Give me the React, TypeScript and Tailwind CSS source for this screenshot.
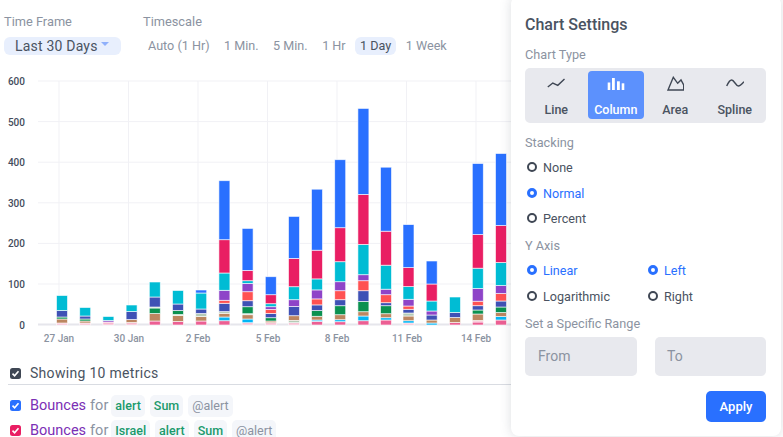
const colors: Record<string, string> = {
  q: '#f8bbd0',
  p: '#ec5f93',
  l: '#03b5f5',
  b: '#bc8660',
  s: '#b5cbb7',
  g: '#0b9150',
  i: '#3f51b5',
  r: '#ff5252',
  u: '#8e44c8',
  c: '#00bcd4',
  m: '#e91e63',
  B: '#2970ff',
};

// each bar: x center, then [colour, height] from the baseline up
const bars: [number, [string, number][]][] = [
  [62, [['q', 2], ['b', 4], ['g', 2], ['i', 6.5], ['c', 15]]],
  [85.2, [['q', 2], ['b', 2], ['g', 2], ['i', 3], ['c', 8.5]]],
  [108.4, [['q', 3], ['u', 1.5], ['c', 4]]],
  [131.6, [['q', 2.5], ['b', 3], ['i', 8], ['c', 6.5]]],
  [154.8, [['p', 4], ['b', 7.5], ['g', 5.5], ['s', 1], ['i', 10], ['c', 15]]],
  [178, [['p', 3.5], ['b', 6], ['s', 1], ['g', 4], ['i', 6.5], ['c', 13.5]]],
  [201.2, [['p', 4], ['b', 4.5], ['s', 3], ['i', 4.5], ['c', 16], ['B', 3]]],
  [224.4, [['p', 4.3], ['l', 3.7], ['b', 3.7], ['s', 1.7], ['i', 8.3], ['r', 3], ['u', 10], ['c', 17.3], ['m', 33.3], ['B', 59]]],
  [247.6, [['q', 2.3], ['l', 3.7], ['b', 4.3], ['s', 1], ['g', 7], ['i', 6], ['r', 9], ['u', 8.3], ['c', 2.7], ['m', 10.3], ['B', 42]]],
  [270.8, [['q', 2.3], ['b', 1.7], ['g', 3.3], ['i', 4.3], ['r', 4], ['u', 2.7], ['c', 3], ['m', 9], ['B', 18]]],
  [294, [['q', 2.3], ['s', 2.3], ['b', 4.7], ['i', 9.3], ['u', 6.7], ['c', 13], ['m', 28.3], ['B', 42]]],
  [317, [['p', 3.7], ['l', 1.3], ['b', 3.7], ['g', 5.7], ['i', 5.7], ['r', 6], ['u', 9], ['c', 11], ['m', 28.7], ['B', 61]]],
  [340.2, [['p', 3.3], ['l', 2], ['b', 5], ['g', 9], ['i', 6], ['r', 9], ['u', 9], ['c', 20], ['m', 34], ['B', 68]]],
  [363.4, [['p', 4.3], ['l', 4.7], ['b', 4.3], ['g', 10.3], ['i', 10.7], ['r', 10], ['u', 6], ['c', 30.3], ['m', 50], ['B', 86]]],
  [386, [['p', 5], ['l', 2.3], ['b', 4], ['g', 8], ['i', 3], ['r', 8], ['u', 5.5], ['c', 24], ['m', 34], ['B', 64]]],
  [408.5, [['q', 2], ['l', 2.3], ['b', 4.7], ['s', 3], ['i', 3.7], ['r', 3.3], ['u', 6.7], ['c', 12.7], ['m', 19], ['B', 43]]],
  [431.7, [['l', 2], ['b', 3], ['i', 5], ['u', 4], ['c', 10], ['m', 17], ['B', 23]]],
  [455, [['p', 2.5], ['b', 5], ['i', 5], ['c', 15.5]]],
  [477.8, [['p', 3], ['q', 1.5], ['b', 6.5], ['g', 4], ['i', 4.3], ['r', 4.5], ['u', 12.7], ['c', 20.3], ['m', 33.7], ['B', 71]]],
  [501, [['p', 5], ['l', 3.5], ['b', 4], ['g', 5.5], ['i', 6], ['r', 7.5], ['u', 8], ['c', 23], ['m', 37], ['B', 72]]],
];

const yTicks = [600, 500, 400, 300, 200, 100, 0];
const gridX = [59, 128.5, 198, 267.5, 337, 406.5, 476];
const xLabels = [
  [59, '27 Jan'],
  [129, '30 Jan'],
  [198, '2 Feb'],
  [268, '5 Feb'],
  [337, '8 Feb'],
  [407, '11 Feb'],
  [476, '14 Feb'],
] as const;

function Chart() {
  return (
    <svg width="512" height="270" viewBox="0 75 512 270" className="block">
      {yTicks.map((t, i) => (
        <g key={t}>
          <line x1="38" x2="512" y1={81 + i * 40.6} y2={81 + i * 40.6} stroke={t === 0 ? '#e6e6ec' : '#f1f1f5'} strokeWidth={t === 0 ? 2 : 1} />
          <text x="25" y={85 + i * 40.6} textAnchor="end" fontSize="10" fontWeight="500" fill="#444c5c" fontFamily="Roboto, sans-serif">{t}</text>
        </g>
      ))}
      {gridX.map((x) => (
        <line key={x} x1={x} x2={x} y1="81" y2="325" stroke="#f1f1f5" strokeWidth="1" />
      ))}
      {bars.map(([x, segs]) => {
        let y = 325;
        return (
          <g key={x}>
            {segs.map(([c, h], i) => {
              y -= h;
              return <rect key={i} x={x - 5.5} y={y} width="11" height={h} fill={colors[c]} stroke="#ffffff" strokeOpacity="0.75" strokeWidth="0.8" />;
            })}
          </g>
        );
      })}
      {xLabels.map(([x, label]) => (
        <text key={label} x={x} y="342" textAnchor="middle" fontSize="10" fontWeight="500" fill="#8b93a1" fontFamily="Roboto, sans-serif">{label}</text>
      ))}
    </svg>
  );
}

function Radio({ label, on }: { label: string; on?: boolean }) {
  return (
    <div className={`flex items-center gap-[6px] pl-[2px] text-[12.6px] leading-[16px] ${on ? 'text-[#2970ff]' : 'text-[#4a5361]'}`}>
      {on ? (
        <span className="h-[10px] w-[10px] -translate-y-[1px] rounded-full border-[3px] border-[#2970ff] bg-white" />
      ) : (
        <span className="h-[10px] w-[10px] -translate-y-[1px] rounded-full border-2 border-[#3f4754] bg-white" />
      )}
      {label}
    </div>
  );
}

function TypeIcon({ name }: { name: string }) {
  if (name === 'Column')
    return (
      <svg width="18" height="15" viewBox="0 0 18 15" fill="#ffffff">
        <rect x="0.7" y="6.5" width="2.6" height="7.5" />
        <rect x="5" y="2" width="2.8" height="12" />
        <rect x="10" y="5.3" width="2.8" height="8.7" />
        <rect x="14.7" y="7.3" width="2.6" height="6.7" />
      </svg>
    );
  const paths: Record<string, string> = {
    Line: 'M0.8 11 L5.8 7 L10.8 9.3 L17.5 3',
    Area: 'M2 14 L7.3 1.3 L11.7 7.3 L15 4 L17.7 9 V14 Z',
    Spline: 'M0.7 10 C2.5 6 4 4 5.7 4 C8 4 10 10 12.3 10 C14 10 16 8 18 5.7',
  };
  return (
    <svg width="18" height="15" viewBox="0 0 18 15" fill="none" stroke="#3f4754" strokeWidth="1.4">
      <path d={paths[name]} />
    </svg>
  );
}

function Tag({ children, gray }: { children: string; gray?: boolean }) {
  return (
    <span className={`rounded-[5px] bg-[#f4f6fa] px-1 py-[3px] text-[12.5px] leading-[16px] ${gray ? 'text-[#8b93a1]' : 'font-medium text-[#1a9a6c]'}`}>
      {children}
    </span>
  );
}

function Check({ color }: { color: string }) {
  return (
    <svg width="11" height="11" viewBox="0 0 11 11" className="ml-[2px] shrink-0">
      <rect width="11" height="11" rx="2.5" fill={color} />
      <path d="M2.5 5.6 L4.6 7.8 L8.5 3.3" fill="none" stroke="#ffffff" strokeWidth="1.6" />
    </svg>
  );
}

function MetricRow({ color, tags }: { color: string; tags: string[] }) {
  return (
    <div className="flex h-[25px] items-center text-[14.5px] leading-[16px]">
      <Check color={color} />
      <span className="ml-[9px] text-[#7b2fb5]">Bounces</span>
      <span className="ml-1 text-[#8b93a1]">for</span>
      <div className="ml-[3px] flex gap-[5px]">
        {tags.map((t, i) => (
          <Tag key={i} gray={t.startsWith('@')}>{t}</Tag>
        ))}
      </div>
    </div>
  );
}

export default function App() {
  const scales = ['Auto (1 Hr)', '1 Min.', '5 Min.', '1 Hr', '1 Day', '1 Week'];
  return (
    <div className="relative h-[437px] w-[783px] overflow-hidden bg-white font-['Roboto',sans-serif]">
      <div className="flex gap-[22px] pl-[4px] pt-[14px]">
        <div>
          <div className="text-[12.8px] leading-[16px] text-[#8b93a1]">Time Frame</div>
          <div className="mt-[7px] flex h-[18px] w-[117px] items-center gap-[3px] rounded-[6px] bg-[#e8effd] pl-[11px] text-[14px] tracking-[0.2px] text-[#4a5361]">
            Last 30 Days
            <span className="mb-[4px] h-0 w-0 border-x-[4px] border-t-[4px] border-x-transparent border-t-[#8fb0fb]" />
          </div>
        </div>
        <div>
          <div className="text-[12.8px] leading-[16px] text-[#8b93a1]">Timescale</div>
          <div className="mt-[7px] flex h-[18px] items-center gap-[4.5px] text-[12.6px] text-[#8b93a1]">
            {scales.map((s) => (
              <span key={s} className={`rounded-[6px] px-[5px] leading-[18px] ${s === '1 Day' ? 'bg-[#e8effd] text-[#4a5361]' : ''}`}>{s}</span>
            ))}
          </div>
        </div>
      </div>
      <div className="mt-[20px]">
        <Chart />
      </div>
      <div className="pl-[8px] pt-[17px]">
        <div className="flex h-[23px] w-[503px] items-center gap-[9px] border-b border-[#d9dce2] text-[14px] tracking-[0.3px] text-[#4a5361]">
          <Check color="#3f4754" />
          Showing 10 metrics
        </div>
        <div className="pt-[8px]">
          <MetricRow color="#2970ff" tags={['alert', 'Sum', '@alert']} />
          <MetricRow color="#e91e63" tags={['Israel', 'alert', 'Sum', '@alert']} />
        </div>
      </div>
      <div className="absolute left-[511px] top-[-4px] flex h-[440px] w-[270px] flex-col rounded-[8px] bg-white pl-[14px] pr-[15px] pt-[19px] shadow-[0_0_12px_rgba(60,70,90,0.18)]">
        <div className="text-[16px] font-medium leading-[20px] text-[#4a5361]">Chart Settings</div>
        <div className="mt-[12px] text-[12.7px] leading-[16px] text-[#8b93a1]">Chart Type</div>
        <div className="mt-[5px] grid h-[55px] grid-cols-4 gap-[3px] rounded-[5px] bg-[#e8e9ee] px-[3px] pb-[4px] pt-[3px]">
          {['Line', 'Column', 'Area', 'Spline'].map((n) => (
            <div key={n} className={`flex flex-col items-center gap-[12px] rounded-[4px] pt-[5px] text-[12.5px] font-medium leading-[14px] ${n === 'Column' ? 'bg-[#5c91fd] text-white' : 'text-[#4a5361]'}`}>
              <TypeIcon name={n} />
              {n}
            </div>
          ))}
        </div>
        <div className="mt-[12px] text-[12.7px] leading-[16px] text-[#8b93a1]">Stacking</div>
        <div className="mt-[9px] flex flex-col gap-[9.5px]">
          <Radio label="None" />
          <Radio label="Normal" on />
          <Radio label="Percent" />
        </div>
        <div className="mt-[11px] text-[12.7px] leading-[16px] text-[#8b93a1]">Y Axis</div>
        <div className="mt-[9px] grid grid-cols-[121px_1fr] gap-y-[10px]">
          <Radio label="Linear" on />
          <Radio label="Left" on />
          <Radio label="Logarithmic" />
          <Radio label="Right" />
        </div>
        <div className="mt-[11px] text-[12.7px] leading-[16px] text-[#8b93a1]">Set a Specific Range</div>
        <div className="mt-[5px] flex justify-between">
          <div className="flex h-[39px] w-[112px] items-center rounded-[5px] bg-[#e8e9ee] pl-[13px] text-[14px] text-[#8b93a1]">From</div>
          <div className="flex h-[39px] w-[111px] items-center rounded-[5px] bg-[#e8e9ee] pl-[12px] text-[14px] text-[#8b93a1]">To</div>
        </div>
        <div className="mt-[15px] flex justify-end">
          <div className="flex h-[31px] w-[60px] items-center justify-center rounded-[5px] bg-[#2970ff] text-[13px] font-medium text-white">Apply</div>
        </div>
      </div>
    </div>
  );
}
